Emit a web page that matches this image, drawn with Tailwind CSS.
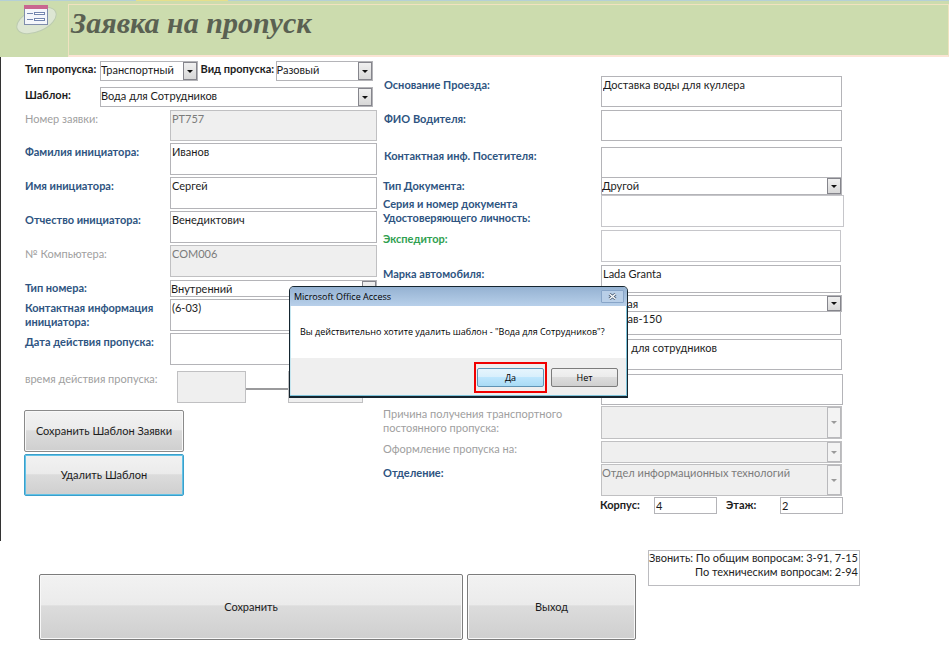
<!DOCTYPE html>
<html lang="ru">
<head>
<meta charset="utf-8">
<title>Заявка на пропуск</title>
<script src="https://cdn.jsdelivr.net/npm/@tailwindcss/browser@4"></script>
</head>
<body class="bg-white">
<div class="relative min-h-screen font-['Lato','Open_Sans',sans-serif] text-[11px] leading-[14px] text-[#1c1c1c]">

<header class="bg-[#ccdcae]">
  <div class="flex h-px bg-[#b5d0d6]"><span class="ml-[136px] w-[92px] bg-[#e6df8c]"></span></div>
  <div class="flex h-14 pt-[3px]">
    <svg class="ml-4 h-8 w-[42px] shrink-0" viewBox="0 0 42 32" aria-hidden="true">
      <ellipse cx="20.500" cy="16.500" rx="21" ry="11" transform="rotate(-24 20.500 16.500)" fill="#dde6d3" stroke="#bccbb0"/>
      <rect x="8.500" y="1.500" width="23" height="19" fill="#f4f6fb" stroke="#7f8dac"/>
      <rect x="8" y="1" width="24" height="4" fill="#c9668f"/>
      <path d="M11 9.500h6M11 15.500h6" stroke="#7486b0"/>
      <rect x="18.500" y="8.500" width="10" height="2" fill="#fff" stroke="#7486b0"/>
      <rect x="18.500" y="14.500" width="10" height="2" fill="#fff" stroke="#7486b0"/>
    </svg>
    <div class="ml-[10px] flex-1 border border-b-2 border-[#f0e2c0] border-b-[#fbe4d4] pl-[2px]">
      <h1 class="font-['Liberation_Serif',serif] text-[30px] leading-[36px] font-bold italic text-[#5a6152]">Заявка на пропуск</h1>
    </div>
  </div>
</header>

<main>
<form>
<div class="grid h-[484px] grid-cols-[minmax(0,376fr)_minmax(0,461fr)] gap-x-[6px] border-l border-[#333] pr-[105px]">

  <section class="flex flex-col pt-1 pl-6">
    <div class="flex h-5 pr-1">
      <label for="passType" class="w-[75px] shrink-0 pt-px font-bold whitespace-nowrap">Тип пропуска:</label>
      <div class="flex min-w-0 flex-1 border border-[#b4b4b8]">
        <select id="passType" class="h-4 min-w-0 flex-1 appearance-none"><option>Транспортный</option></select>
        <span class="flex w-[14px] items-center justify-center border border-[#85858c] bg-linear-to-b from-[#f0f0f0] to-[#d8d8d8]"><svg class="h-[3px] w-[6px]" viewBox="0 0 6 3"><path d="M0 0h6L3 3z" fill="#111"/></svg></span>
      </div>
      <label for="passKind" class="w-[78px] shrink-0 pt-px pl-[3px] font-bold whitespace-nowrap">Вид пропуска:</label>
      <div class="flex min-w-0 flex-1 border border-[#b4b4b8]">
        <select id="passKind" class="h-4 min-w-0 flex-1 appearance-none"><option>Разовый</option></select>
        <span class="flex w-[14px] items-center justify-center border border-[#85858c] bg-linear-to-b from-[#f0f0f0] to-[#d8d8d8]"><svg class="h-[3px] w-[6px]" viewBox="0 0 6 3"><path d="M0 0h6L3 3z" fill="#111"/></svg></span>
      </div>
    </div>
    <div class="mt-[6px] flex h-5 pr-1">
      <label for="tpl" class="w-[75px] shrink-0 pt-px font-bold">Шаблон:</label>
      <div class="flex min-w-0 flex-1 border border-[#b4b4b8]">
        <select id="tpl" class="h-4 min-w-0 flex-1 appearance-none"><option>Вода для Сотрудников</option></select>
        <span class="flex w-[14px] items-center justify-center border border-[#85858c] bg-linear-to-b from-[#f0f0f0] to-[#d8d8d8]"><svg class="h-[3px] w-[6px]" viewBox="0 0 6 3"><path d="M0 0h6L3 3z" fill="#111"/></svg></span>
      </div>
    </div>
    <div class="mt-[3px] flex">
      <label for="num" class="w-[145px] shrink-0 pt-[2px] text-[#a0a0a0]">Номер заявки:</label>
      <input id="num" disabled value="PT757" class="h-[31px] min-w-0 flex-1 border border-[#c0c0c2] bg-[#efefef] pb-[15px] pl-px text-[#7b7b7b]">
    </div>
    <div class="mt-[2px] flex">
      <label for="fam" class="w-[145px] shrink-0 pt-[2px] font-bold text-[#2e5481]">Фамилия инициатора:</label>
      <input id="fam" value="Иванов" class="h-8 min-w-0 flex-1 border border-[#b4b4b8] pb-[15px] pl-px">
    </div>
    <div class="mt-[2px] flex">
      <label for="nm" class="w-[145px] shrink-0 pt-[2px] font-bold text-[#2e5481]">Имя инициатора:</label>
      <input id="nm" value="Сергей" class="h-8 min-w-0 flex-1 border border-[#b4b4b8] pb-[15px] pl-px">
    </div>
    <div class="mt-[2px] flex">
      <label for="otch" class="w-[145px] shrink-0 pt-[2px] font-bold text-[#2e5481]">Отчество инициатора:</label>
      <input id="otch" value="Венедиктович" class="h-8 min-w-0 flex-1 border border-[#b4b4b8] pb-[15px] pl-px">
    </div>
    <div class="mt-[2px] flex">
      <label for="comp" class="w-[145px] shrink-0 pt-[2px] text-[#a0a0a0]">№ Компьютера:</label>
      <input id="comp" disabled value="COM006" class="h-8 min-w-0 flex-1 border border-[#c0c0c2] bg-[#efefef] pb-[15px] pl-px text-[#7b7b7b]">
    </div>
    <div class="mt-[3px] flex h-[17px]">
      <label for="numType" class="w-[145px] shrink-0 pt-px font-bold text-[#2e5481]">Тип номера:</label>
      <div class="flex min-w-0 flex-1 border border-[#b4b4b8]">
        <select id="numType" class="h-[15px] min-w-0 flex-1 appearance-none"><option>Внутренний</option></select>
        <span class="flex w-[14px] items-center justify-center border border-[#85858c] bg-linear-to-b from-[#f0f0f0] to-[#d8d8d8]"><svg class="h-[3px] w-[6px]" viewBox="0 0 6 3"><path d="M0 0h6L3 3z" fill="#111"/></svg></span>
      </div>
    </div>
    <div class="mt-[2px] flex">
      <label for="cont" class="w-[145px] shrink-0 pt-[2px] font-bold text-[#2e5481]">Контактная информация<br>инициатора:</label>
      <input id="cont" value="(6-03)" class="h-8 min-w-0 flex-1 border border-[#b4b4b8] pb-[15px] pl-px">
    </div>
    <div class="mt-[2px] flex">
      <label for="dt" class="w-[145px] shrink-0 pt-[2px] font-bold text-[#2e5481]">Дата действия пропуска:</label>
      <input id="dt" class="h-8 min-w-0 flex-1 border border-[#b4b4b8] pb-[15px] pl-px">
    </div>
    <div class="mt-[6px] flex pr-[14px]">
      <label for="tm" class="w-[152px] shrink-0 pt-px text-[#a0a0a0]">время действия пропуска:</label>
      <input id="tm" disabled class="h-8 min-w-0 flex-[68] border border-[#c0c0c2] bg-[#efefef]">
      <span class="mt-[17px] h-[2px] flex-[43] bg-[#9a9a9c]"></span>
      <input aria-label="время окончания" disabled class="h-8 min-w-0 flex-[75] border border-[#c0c0c2] bg-[#efefef]">
    </div>
    <button type="button" class="mt-[7px] -ml-px h-[42px] w-40 rounded-[2px] border border-[#8a8a8a] bg-[linear-gradient(#f2f2f2,#ebebeb_48%,#dcdcdc_49%,#cfcfcf)] shadow-[inset_0_0_0_1px_#f8f8f8]">Сохранить Шаблон Заявки</button>
    <button type="button" class="mt-[2px] -ml-px h-[42px] w-40 rounded-[2px] border border-[#3a9fcb] bg-[linear-gradient(#f2f2f2,#ebebeb_48%,#dcdcdc_49%,#cfcfcf)] shadow-[inset_0_0_0_1px_#62c2e6]">Удалить Шаблон</button>
  </section>

  <section class="flex flex-col pt-[19px]">
    <div class="flex pr-[2px]">
      <label for="osn" class="w-[218px] shrink-0 pt-[2px] pl-px font-bold text-[#2e5481]">Основание Проезда:</label>
      <input id="osn" value="Доставка воды для куллера" class="h-[31px] min-w-0 flex-1 border border-[#b4b4b8] pb-[15px] pl-px">
    </div>
    <div class="mt-[3px] flex pr-[2px]">
      <label for="fio" class="w-[218px] shrink-0 pt-[2px] pl-px font-bold text-[#2e5481]">ФИО Водителя:</label>
      <input id="fio" class="h-[31px] min-w-0 flex-1 border border-[#b4b4b8] pb-[15px] pl-px">
    </div>
    <div class="mt-[6px] flex pr-[2px]">
      <label for="kp" class="w-[218px] shrink-0 pt-[2px] pl-px font-bold text-[#2e5481]">Контактная инф. Посетителя:</label>
      <input id="kp" class="h-[31px] min-w-0 flex-1 border border-[#b4b4b8] pb-[15px] pl-px">
    </div>
    <div class="flex h-[17px] pr-[2px]">
      <label for="doc" class="w-[218px] shrink-0 pt-px font-bold text-[#2e5481]">Тип Документа:</label>
      <div class="flex min-w-0 flex-1 border border-t-0 border-[#b4b4b8]">
        <select id="doc" class="h-4 min-w-0 flex-1 appearance-none"><option>Другой</option></select>
        <span class="flex w-[14px] items-center justify-center border border-[#85858c] bg-linear-to-b from-[#f0f0f0] to-[#d8d8d8]"><svg class="h-[3px] w-[6px]" viewBox="0 0 6 3"><path d="M0 0h6L3 3z" fill="#111"/></svg></span>
      </div>
    </div>
    <div class="flex">
      <label for="ser" class="w-[218px] shrink-0 pt-[2px] font-bold text-[#2e5481]">Серия и номер документа<br>Удостоверяющего личность:</label>
      <input id="ser" class="h-8 min-w-0 flex-1 border border-[#c6c6ca] pl-px">
    </div>
    <div class="mt-[3px] flex pr-[3px]">
      <label for="exp" class="w-[218px] shrink-0 pt-[2px] font-bold text-[#2fa04f]">Экспедитор:</label>
      <input id="exp" class="h-8 min-w-0 flex-1 border border-[#c6c6ca] pl-px">
    </div>
    <div class="mt-[3px] flex pr-[3px]">
      <label for="car" class="w-[218px] shrink-0 pt-[2px] font-bold text-[#2e5481]">Марка автомобиля:</label>
      <input id="car" value="Lada Granta" class="h-7 min-w-0 flex-1 border border-[#b4b4b8] pb-[11px] pl-px">
    </div>
    <div class="mt-[2px] ml-[218px] flex h-[17px] border border-[#b4b4b8] mr-[2px]">
      <select aria-label="Цвет" class="h-[15px] min-w-0 flex-1 appearance-none"><option>Черная</option></select>
      <span class="flex w-[14px] items-center justify-center border border-[#85858c] bg-linear-to-b from-[#f0f0f0] to-[#d8d8d8]"><svg class="h-[3px] w-[6px]" viewBox="0 0 6 3"><path d="M0 0h6L3 3z" fill="#111"/></svg></span>
    </div>
    <div class="ml-[218px] flex pr-[3px]">
      <input aria-label="Номер автомобиля" value="в001ав-150" class="h-[23px] min-w-0 flex-1 border border-t-0 border-[#b4b4b8] pb-[9px] pl-px">
    </div>
    <div class="mt-1 ml-[218px] flex pr-[2px]">
      <input aria-label="Груз" value="Вода для сотрудников" class="h-[31px] min-w-0 flex-1 border border-[#b4b4b8] pb-[15px] pl-px">
    </div>
    <div class="mt-1 ml-[218px] flex pr-px">
      <input aria-label="Примечание" class="h-[31px] min-w-0 flex-1 border border-[#b4b4b8] pl-px">
    </div>
    <div class="mt-px flex pr-[2px]">
      <label for="why" class="w-[218px] shrink-0 pt-px text-[#a0a0a0]">Причина получения транспортного<br>постоянного пропуска:</label>
      <div class="flex h-[33px] min-w-0 flex-1 border border-[#c0c0c2] bg-[#efefef]">
        <select id="why" disabled class="min-w-0 flex-1 appearance-none"><option></option></select>
        <span class="flex w-[14px] items-center justify-center border border-[#b9b9bc] bg-[#f3f3f3]"><svg class="h-[3px] w-[6px]" viewBox="0 0 6 3"><path d="M0 0h6L3 3z" fill="#9a9a9a"/></svg></span>
      </div>
    </div>
    <div class="mt-[2px] flex pr-[2px]">
      <label for="of" class="w-[218px] shrink-0 pt-px text-[#a0a0a0]">Оформление пропуска на:</label>
      <div class="flex h-[22px] min-w-0 flex-1 border border-[#c0c0c2] bg-[#efefef]">
        <select id="of" disabled class="min-w-0 flex-1 appearance-none"><option></option></select>
        <span class="flex w-[14px] items-center justify-center border border-[#b9b9bc] bg-[#f3f3f3]"><svg class="h-[3px] w-[6px]" viewBox="0 0 6 3"><path d="M0 0h6L3 3z" fill="#9a9a9a"/></svg></span>
      </div>
    </div>
    <div class="mt-px flex pr-[2px]">
      <label for="dep" class="w-[218px] shrink-0 pt-[2px] font-bold text-[#2e5481]">Отделение:</label>
      <div class="flex h-8 min-w-0 flex-1 border border-[#c0c0c2] bg-[#efefef]">
        <select id="dep" disabled class="h-4 min-w-0 flex-1 appearance-none text-[#7b7b7b] opacity-100"><option>Отдел информационных технологий</option></select>
        <span class="flex w-[14px] items-center justify-center border border-[#b9b9bc] bg-[#f3f3f3]"><svg class="h-[3px] w-[6px]" viewBox="0 0 6 3"><path d="M0 0h6L3 3z" fill="#9a9a9a"/></svg></span>
      </div>
    </div>
    <div class="mt-px ml-[217px] flex pr-px">
      <label for="korp" class="w-[54px] shrink-0 pt-px font-bold">Корпус:</label>
      <input id="korp" value="4" class="h-[17px] min-w-0 flex-1 border border-[#b4b4b8] pl-px">
      <label for="fl" class="w-[63px] shrink-0 pt-px pl-[9px] font-bold">Этаж:</label>
      <input id="fl" value="2" class="h-[17px] min-w-0 flex-1 border border-[#b4b4b8] pl-px">
    </div>
  </section>
</div>

<div class="grid grid-cols-[minmax(0,428fr)_minmax(0,169fr)_minmax(0,224fr)] items-start pt-[9px] pr-[89px] pl-[39px]">
  <button type="submit" class="mt-6 mr-1 h-[66px] rounded-[2px] border border-[#7c7c7c] bg-[linear-gradient(#f2f2f2,#ebebeb_47%,#dcdcdc_48%,#cfcfcf)] shadow-[inset_0_0_0_1px_#f8f8f8]">Сохранить</button>
  <button type="button" class="mt-6 h-[66px] rounded-[2px] border border-[#7c7c7c] bg-[linear-gradient(#f2f2f2,#ebebeb_47%,#dcdcdc_48%,#cfcfcf)] shadow-[inset_0_0_0_1px_#f8f8f8]">Выход</button>
  <p class="ml-3 h-[36px] border border-[#bcbcc0] pr-px text-right whitespace-nowrap">Звонить: По общим вопросам: 3-91, 7-15<br>По техническим вопросам: 2-94</p>
</div>
</form>
</main>

<div role="dialog" aria-labelledby="dlgTitle" class="absolute top-[286px] left-[289px] flex w-[339px] flex-col rounded-t-[5px] border border-b-2 border-[#15252f] bg-[#efefef] font-['Open_Sans',sans-serif] text-[9px] text-black shadow-[inset_-1px_-1px_0_#7fc4da,inset_1px_0_0_#c5e6f0]">
  <div class="flex h-[19px] items-center justify-between rounded-t-[4px] bg-linear-to-b from-[#95b2d2] to-[#b8d0ea] pr-[3px] pl-1">
    <h2 id="dlgTitle">Microsoft Office Access</h2>
    <button type="button" aria-label="Закрыть" class="flex h-[13px] w-[23px] items-center justify-center rounded-[1px] border border-[#88a5c8] bg-[#b9cfe8]"><svg class="h-[7px] w-[9px]" viewBox="0 0 9 7"><path d="M1.500 1l6 5M7.500 1l-6 5" stroke="#52657d" stroke-width="3"/><path d="M1.500 1l6 5M7.500 1l-6 5" stroke="#fff" stroke-width="1.300"/></svg></button>
  </div>
  <p class="mx-px bg-white px-[9px] pt-[19px] pb-[19px] whitespace-nowrap">Вы действительно хотите удалить шаблон - "Вода для Сотрудников"?</p>
  <div class="flex items-center justify-end gap-1 pt-1 pr-[9px] pb-[3px]">
    <span class="flex border-2 border-[#f00000] px-px py-1"><button type="button" class="h-[19px] w-[67px] rounded-[2px] border border-[#5f93b4] bg-[linear-gradient(#e6f5fd,#d8effc_48%,#bee6fd_49%,#a9dbf5)]">Да</button></span>
    <button type="button" class="h-[19px] w-[67px] rounded-[2px] border border-[#7c7c7c] bg-[linear-gradient(#f2f2f2,#ebebeb_48%,#dcdcdc_49%,#cfcfcf)]">Нет</button>
  </div>
</div>
</div>
</body>
</html>
